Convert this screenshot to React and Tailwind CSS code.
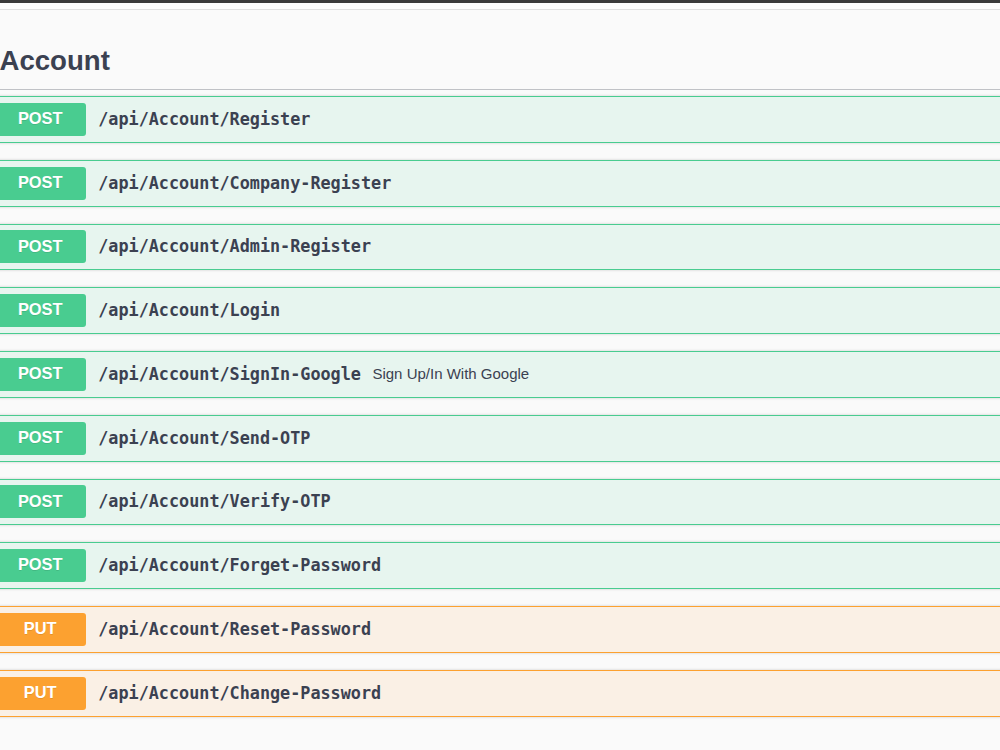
import React from 'react';

const ops = [
  { method: 'POST', path: '/api/Account/Register' },
  { method: 'POST', path: '/api/Account/Company-Register' },
  { method: 'POST', path: '/api/Account/Admin-Register' },
  { method: 'POST', path: '/api/Account/Login' },
  { method: 'POST', path: '/api/Account/SignIn-Google', summary: 'Sign Up/In With Google' },
  { method: 'POST', path: '/api/Account/Send-OTP' },
  { method: 'POST', path: '/api/Account/Verify-OTP' },
  { method: 'POST', path: '/api/Account/Forget-Password' },
  { method: 'PUT', path: '/api/Account/Reset-Password' },
  { method: 'PUT', path: '/api/Account/Change-Password' },
];

function OpBlock({ method, path, summary }) {
  const isPut = method === 'PUT';
  return (
    <div
      className={`flex items-center h-[46.75px] mb-[17px] border rounded-[4px] px-[5.75px] shadow-[0_0_3px_rgba(0,0,0,0.19)] ${
        isPut
          ? 'bg-[rgba(252,161,48,0.1)] border-[#fca130]'
          : 'bg-[rgba(73,204,144,0.1)] border-[#49cc90]'
      }`}
    >
      <span
        className={`flex items-center justify-center w-[91px] h-[33px] pb-[2px] rounded-[3px] text-white font-bold text-[16.4px] [text-shadow:0_1px_0_rgba(0,0,0,0.1)] ${
          isPut ? 'bg-[#fca130]' : 'bg-[#49cc90]'
        }`}
        style={{ fontFamily: '"Liberation Sans", Arial, sans-serif' }}
      >
        {method}
      </span>
      <span
        className="pl-[12.5px] pr-[11.5px] text-[16.8px] font-bold text-[#3b4151]"
        style={{ fontFamily: '"DejaVu Sans Mono", monospace' }}
      >
        {path}
      </span>
      {summary && (
        <span
          className="text-[15px] text-[#3b4151]"
          style={{ fontFamily: '"Liberation Sans", Arial, sans-serif' }}
        >
          {summary}
        </span>
      )}
    </div>
  );
}

export default function App() {
  return (
    <div className="w-[1000px] h-[750px] overflow-hidden bg-[#fafafa]">
      {/* top bar */}
      <div className="h-[3px] bg-[#3d3d3d]" />
      <div className="h-[6px] bg-white" />
      <div className="h-px bg-[#e2e2e2]" />

      <div className="ml-[-12px] w-[1040px]">
        <h3
          className="pl-[11.5px] pt-[35px] pb-[12px] border-b border-[rgba(59,65,81,0.3)] text-[27.6px] leading-[32px] font-bold text-[#3b4151]"
          style={{ fontFamily: '"Liberation Sans", Arial, sans-serif' }}
        >
          Account
        </h3>
        <div className="mt-[6px]">
          {ops.map((op) => (
            <OpBlock key={op.path} {...op} />
          ))}
        </div>
      </div>
    </div>
  );
}
